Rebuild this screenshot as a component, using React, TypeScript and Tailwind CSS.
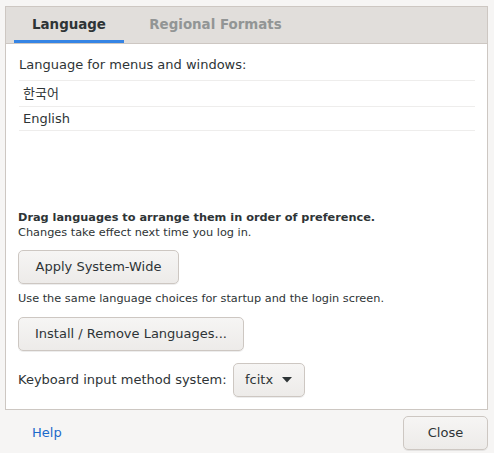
import React from "react";

const btn =
  "flex items-center justify-center h-[34px] rounded-[5px] border border-[#cdc7c2] bg-gradient-to-b from-[#f6f5f4] to-[#edebe9] shadow-[0_1px_0_rgba(0,0,0,0.07)] text-[13px] text-[#2e3436]";

export default function App() {
  return (
    <div
      className="w-[494px] h-[453px] bg-[#f6f5f4] flex flex-col text-[#2e3436] overflow-hidden"
      style={{ fontFamily: '"DejaVu Sans", "Noto Sans CJK KR", sans-serif' }}
    >
      <div className="mt-[6px] ml-[5px] mr-[6px] h-[404px] border border-[#cdc7c2] bg-white flex flex-col">
        <div className="h-[37px] bg-[#e1dedb] border-b border-[#cdc7c2] flex items-stretch shrink-0">
          <div className="ml-[8px] w-[110px] flex items-center justify-center text-[13.4px] font-bold text-[#2e3436] border-b-[3px] border-[#3584e4] pt-[3px]">
            Language
          </div>
          <div className="ml-[6px] w-[171px] flex items-center justify-center text-[13.4px] font-bold text-[#929595]">
            Regional Formats
          </div>
        </div>
        <div className="flex-1 flex flex-col pl-[12px] pr-[12px] pt-[13px]">
          <div className="text-[13px] leading-[15px] pl-[1px]">Language for menus and windows:</div>
          <div className="mt-[8px] ml-[1px] border-t border-[#eeedec]">
            <div className="h-[26px] border-b border-[#eeedec] flex items-center pl-[4px] text-[13px]">
              한국어
            </div>
            <div className="h-[24px] border-b border-[#eeedec] flex items-center pl-[4px] text-[13px]">
              English
            </div>
          </div>
          <div className="mt-[79px] text-[11.3px] leading-[15px] font-bold">
            Drag languages to arrange them in order of preference.
          </div>
          <div className="text-[11.3px] leading-[15px]">Changes take effect next time you log in.</div>
          <div className={`${btn} mt-[10px] w-[161px]`}>Apply System-Wide</div>
          <div className="mt-[7px] text-[11.3px] leading-[15px]">
            Use the same language choices for startup and the login screen.
          </div>
          <div className={`${btn} mt-[11px] w-[226px]`}>Install / Remove Languages...</div>
          <div className="mt-[12px] flex items-center">
            <span className="text-[13px]">Keyboard input method system:</span>
            <div className={`${btn} ml-[6px] w-[72px] gap-[9px]`}>
              <span>fcitx</span>
              <svg width="10" height="6" viewBox="0 0 10 6">
                <path d="M0 0 L10 0 L5 5.5 Z" fill="#2e3436" />
              </svg>
            </div>
          </div>
        </div>
      </div>
      <div className="flex items-start justify-between mt-[6px] mr-[6px]">
        <div className="ml-[32px] mt-[7px] text-[13px] text-[#1b6acb]">Help</div>
        <div className={`${btn} w-[85px]`}>Close</div>
      </div>
    </div>
  );
}
